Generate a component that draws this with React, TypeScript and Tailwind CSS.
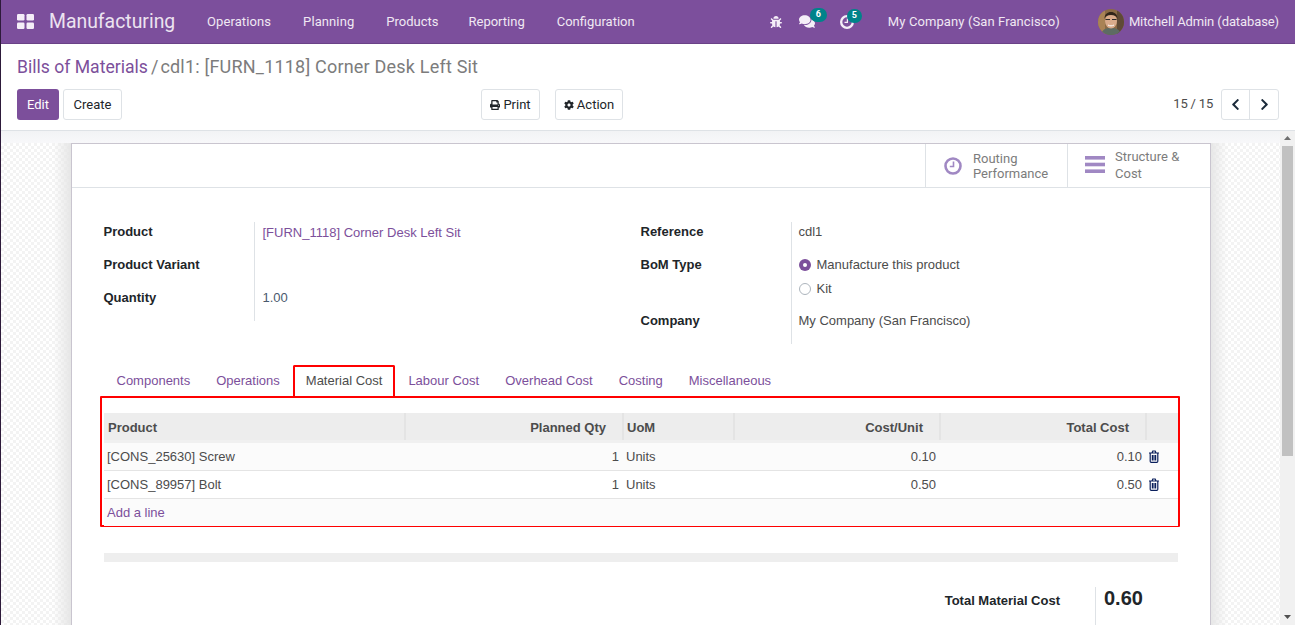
import React from "react";
import { FaBug, FaComments, FaPrint, FaCog, FaChevronLeft, FaChevronRight } from "react-icons/fa";

const Trash = () => (
  <svg viewBox="0 0 12 13" className="w-[12px] h-[13px]" fill="none" stroke="#0a1f5c" strokeWidth="1.2">
    <path d="M1 3h10M4 3l.8-2h2.400L8 3" />
    <path d="M2.200 3v8.200c0 .7.4 1.100 1 1.100h5.600c.6 0 1-.4 1-1.100V3" />
    <path d="M4.400 5v5.500M6 5v5.500M7.600 5v5.500" />
  </svg>
);

const Clock = ({ className, color, width }: { className: string; color: string; width: number }) => (
  <svg viewBox="0 0 18 18" className={className} fill="none" stroke={color}>
    <circle cx="9" cy="9" r="7.500" strokeWidth={width} />
    <path d="M9.500 4.500v5H5.800" strokeWidth="1.600" />
  </svg>
);

const Avatar = () => (
  <svg viewBox="0 0 26 26" className="w-[26px] h-[26px] rounded-full shrink-0">
    <rect width="26" height="26" fill="#8a6a45" />
    <rect x="0" y="0" width="7" height="26" fill="#a98355" />
    <rect x="19" y="0" width="7" height="26" fill="#5f4a36" />
    <path d="M3 26c1-6 5-7 10-7s9 1 10 7z" fill="#5d6b63" />
    <ellipse cx="13" cy="12" rx="6" ry="7.500" fill="#d9ab8b" />
    <path d="M6.500 10c0-5 3-7 6.500-7s6.500 2 6.500 7c-1-3-3-4-6.500-4s-5.500 1-6.500 4z" fill="#2f2419" />
    <path d="M7.500 10.500h4.500M14 10.500h4.500" stroke="#2a2a2a" strokeWidth="1.200" />
    <path d="M10 16c2 1.200 4 1.200 6 0" stroke="#fff" strokeWidth="1" fill="none" />
  </svg>
);

const Menu = ({ children, className = "" }: { children: React.ReactNode; className?: string }) => (
  <span className={`text-[13px] text-[#f0e8f3] ${className}`}>{children}</span>
);

const Field = ({ label, children, tight }: { label: string; children?: React.ReactNode; tight?: boolean }) => (
  <div className="h-[33px] flex">
    <div className="w-[150px] font-bold text-[#212529]">{label}</div>
    <div className={`border-l border-[#dee2e6] ${tight ? "pl-[7px]" : "pl-[8px] pt-[1px]"}`}>{children}</div>
  </div>
);

const Tab = ({ children, active }: { children: React.ReactNode; active?: boolean }) => (
  <div
    className={
      active
        ? "h-[31px] pb-[2px] px-[11px] flex items-center border-2 border-b-0 border-[#ff0000] rounded-t-[2px] text-[#4c4c4c]"
        : "h-[31px] px-[13px] flex items-center text-[#7c4f9b]"
    }
  >
    {children}
  </div>
);

const Row = ({ name, qty, unit, total, alt }: { name: string; qty: string; unit: string; total: string; alt?: boolean }) => (
  <div
    className={`grid grid-cols-[302px_218px_111px_206px_206px_31px] items-center border-b border-[#e4e4e4] h-[28px] ${
      alt ? "bg-white" : "bg-[#fbfbfb]"
    }`}
  >
    <div className="pl-[3px]">{name}</div>
    <div className="text-right pr-[5px]">{qty}</div>
    <div className="pl-[2px]">Units</div>
    <div className="text-right pr-[5px]">{unit}</div>
    <div className="text-right pr-[5px]">{total}</div>
    <div className="pl-[1px] flex items-center"><Trash /></div>
  </div>
);

const Head = ({ children, right, last, left = "pl-[3px]" }: { children?: React.ReactNode; right?: boolean; last?: boolean; left?: string }) => (
  <div
    className={`h-[27px] pt-[2px] flex items-center font-bold text-[#4c4c4c] ${last ? "" : "border-r-2 border-[#e4e4e4]"} ${
      right ? "justify-end pr-[16px]" : left
    }`}
  >
    {children}
  </div>
);

export default function App() {
  return (
    <div className="w-[1295px] h-[625px] overflow-hidden flex flex-col bg-white border-l border-[#2d1a3a] [font-family:Roboto,sans-serif]">
      <nav className="h-[44px] shrink-0 bg-[#7c4f9c] border-b border-[#6a4287] flex items-center pl-[16px] pr-[16px]">
        <svg viewBox="0 0 17 15" className="w-[17px] h-[15px] shrink-0" fill="#f5eef8">
          <rect x="0" y="0" width="7.500" height="6.500" rx="1.200" />
          <rect x="9.500" y="0" width="7.500" height="6.500" rx="1.200" />
          <rect x="0" y="8.500" width="7.500" height="6.500" rx="1.200" />
          <rect x="9.500" y="8.500" width="7.500" height="6.500" rx="1.200" />
        </svg>
        <span className="ml-[15px] text-[19.4px] text-[#ece3f0] w-[158px]">Manufacturing</span>
        <div className="flex gap-[32px] items-center">
          <Menu className="tracking-[0.1px]">Operations</Menu>
          <Menu className="tracking-[0.1px]">Planning</Menu>
          <Menu className="-mr-[2px]">Products</Menu>
          <Menu>Reporting</Menu>
          <Menu>Configuration</Menu>
        </div>
        <div className="ml-auto flex items-center">
          <FaBug className="text-[#f5eef8] w-[12px] h-[12px]" />
          <div className="relative ml-[17px] mr-[25px]">
            <FaComments className="text-[#f5eef8] w-[16px] h-[15px]" />
            <span className="absolute -top-[6px] left-[11px] w-[17px] h-[14px] rounded-full bg-[#00838a] text-white text-[9px] font-bold flex items-center justify-center">6</span>
          </div>
          <div className="relative mr-[34px]">
            <Clock className="w-[14px] h-[14px]" color="#f5eef8" width={3} />
            <span className="absolute -top-[6px] left-[7px] w-[15px] h-[14px] rounded-full bg-[#00838a] text-white text-[9px] font-bold flex items-center justify-center">5</span>
          </div>
          <span className="text-[13px] text-[#f0e8f3] tracking-[0.1px]">My Company (San Francisco)</span>
          <div className="ml-[38px] mr-[5px]"><Avatar /></div>
          <span className="text-[13px] text-[#f0e8f3] tracking-[-0.1px]">Mitchell Admin (database)</span>
        </div>
      </nav>

      <header className="h-[87px] shrink-0 border-b border-[#dee2e6] pl-[16px] pr-[16px] pt-[11px]">
        <div className="text-[18px] leading-[24px] text-[#7c7c7c]">
          <span className="text-[#7c4f9b] text-[17.6px]">Bills of Materials</span>
          <span className="ml-[3px] mr-[2px]">/</span>
          <span className="tracking-[0.2px]">cdl1: [FURN_1118] Corner Desk Left Sit</span>
        </div>
        <div className="mt-[10px] flex items-center text-[13px]">
          <button className="h-[31px] w-[42px] rounded-[3px] bg-[#7c4f9b] text-white">Edit</button>
          <button className="ml-[4px] h-[31px] w-[59px] rounded-[3px] border border-[#dee2e6] text-[#212529]">Create</button>
          <button className="ml-[359px] h-[31px] w-[59px] rounded-[3px] border border-[#dee2e6] text-[#212529] flex items-center justify-center gap-[3px]">
            <FaPrint className="text-[10px]" />Print
          </button>
          <button className="ml-[15px] h-[31px] w-[68px] rounded-[3px] border border-[#dee2e6] text-[#212529] flex items-center justify-center gap-[3px]">
            <FaCog className="text-[10px]" />Action
          </button>
          <span className="ml-auto mr-[8px] pb-[2px] text-[#4c4c4c] tracking-[-0.2px]">15 / 15</span>
          <div className="h-[31px] flex border border-[#dee2e6] rounded-[3px] text-[#1b2a3a]">
            <div className="w-[28px] flex items-center justify-center border-r border-[#dee2e6]"><FaChevronLeft className="text-[13px]" /></div>
            <div className="w-[28px] flex items-center justify-center"><FaChevronRight className="text-[13px]" /></div>
          </div>
        </div>
      </header>

      <div className="flex-1 min-h-0 flex">
        <main className="relative flex-1 overflow-hidden pl-[70px] pt-[12px] bg-[repeating-conic-gradient(#f3f3f3_0_25%,#ffffff_0_50%)] bg-[length:6px_6px]">
          <div className="absolute top-0 left-0 right-0 h-[12px] bg-gradient-to-b from-[#f2f3f5] to-[#f8f8fa]" />
          <div className="absolute top-[12px] bottom-0 left-[52px] w-[18px] bg-gradient-to-r from-transparent to-[#e6e6e6]" />
          <div className="absolute top-[12px] bottom-0 left-[1209px] w-[18px] bg-gradient-to-r from-[#e6e6e6] to-transparent" />
          <section className="relative w-[1140px] h-[600px] bg-white border border-[#c9c5cf] text-[13px] text-[#4c4c4c] [font-family:Liberation_Sans,sans-serif]">
            <div className="h-[44px] flex justify-end border-b border-[#dee2e6] [font-family:Roboto,sans-serif] text-[#7c7c7c]">
              <div className="w-[142px] border-l border-[#dee2e6] flex items-center pl-[18px] gap-[11px] leading-[15px]">
                <Clock className="w-[18px] h-[18px] shrink-0" color="#a088c3" width={2.600} />
                <span>Routing<br />Performance</span>
              </div>
              <div className="w-[143px] border-l border-[#dee2e6] flex items-center pl-[17px] gap-[10px] leading-[17px] pb-[2px]">
                <svg viewBox="0 0 20 17" className="w-[20px] h-[17px] shrink-0" fill="#a088c3">
                  <rect y="0" width="20" height="3.600" />
                  <rect y="6.700" width="20" height="3.600" />
                  <rect y="13.400" width="20" height="3.600" />
                </svg>
                <span>Structure &amp;<br />Cost</span>
              </div>
            </div>

            <div className="flex pl-[31.500px] pt-[34px]">
              <div className="w-[537px]">
                <Field label="Product"><span className="text-[#7c4f9b]">[FURN_1118] Corner Desk Left Sit</span></Field>
                <Field label="Product Variant" />
                <Field label="Quantity" tight><span className="pl-[1px] text-[#4a5a6e]">1.00</span></Field>
              </div>
              <div>
                <Field label="Reference" tight>cdl1</Field>
                <div className="h-[56px] flex">
                  <div className="w-[150px] font-bold text-[#212529]">BoM Type</div>
                  <div className="pl-[7px] pt-[2px] border-l border-[#dee2e6] flex flex-col gap-[9px]">
                    <div className="flex items-center gap-[6px] h-[15px]">
                      <span className="w-[12px] h-[12px] rounded-full bg-[#7c4f9b] flex items-center justify-center"><span className="w-[4px] h-[4px] rounded-full bg-white" /></span>
                      <span>Manufacture this product</span>
                    </div>
                    <div className="flex items-center gap-[6px] h-[15px]">
                      <span className="w-[12px] h-[12px] rounded-full border border-[#adb5bd] bg-white" />
                      <span>Kit</span>
                    </div>
                  </div>
                </div>
                <Field label="Company" tight>My Company (San Francisco)</Field>
              </div>
            </div>

            <div className="ml-[28px] mr-[30px] mt-[21px]">
              <div className="flex pl-[3.500px]">
                <Tab>Components</Tab>
                <Tab>Operations</Tab>
                <Tab active>Material Cost</Tab>
                <Tab>Labour Cost</Tab>
                <Tab>Overhead Cost</Tab>
                <Tab>Costing</Tab>
                <Tab>Miscellaneous</Tab>
              </div>
              <div className="border-2 border-[#ff0000] rounded-[1px] pt-[15px] pl-[2px] pr-0 h-[131px] box-border">
                <div className="grid grid-cols-[302px_218px_111px_206px_206px_31px] bg-[#ededed] h-[30px] border-b-[3px] border-[#f0f0f0]">
                  <Head left="pl-[4px]">Product</Head>
                  <Head right>Planned Qty</Head>
                  <Head>UoM</Head>
                  <Head right>Cost/Unit</Head>
                  <Head right>Total Cost</Head>
                  <Head last />
                </div>
                <Row name="[CONS_25630] Screw" qty="1" unit="0.10" total="0.10" />
                <Row name="[CONS_89957] Bolt" qty="1" unit="0.50" total="0.50" alt />
                <div className="h-[27px] bg-[#fbfbfb] flex items-center pl-[3px] text-[#7c4f9b]">Add a line</div>
              </div>
            </div>

            <div className="ml-[32px] mr-[32px] mt-[26px] h-[9px] bg-[#eeeeee]" />

            <div className="flex justify-end mr-[31px] mt-[25px]">
              <div className="font-bold text-[#212529] pr-[35px] pt-[4px]">Total Material Cost</div>
              <div className="border-l border-[#dee2e6] w-[84px] pl-[8px] h-[40px] text-[20px] leading-[22px] font-bold text-[#212529]">0.60</div>
            </div>
          </section>
        </main>
        <aside className="w-[15px] shrink-0 bg-[#f1f1f1] flex flex-col items-center px-[2px]">
          <svg viewBox="0 0 7 4" className="w-[7px] h-[4px] mt-[5px] mb-[6px]" fill="#6e6e6e"><path d="M3.500 0L7 4H0z" /></svg>
          <div className="w-[11px] h-[310px] bg-[#c1c1c1]" />
          <svg viewBox="0 0 7 4" className="w-[7px] h-[4px] mt-auto mb-[6px]" fill="#505050"><path d="M3.500 4L7 0H0z" /></svg>
        </aside>
      </div>
    </div>
  );
}
